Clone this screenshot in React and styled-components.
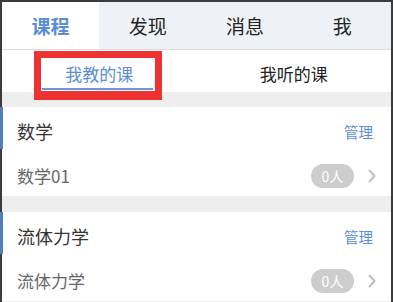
import React from "react";
import styled, { createGlobalStyle } from "styled-components";

const GlobalStyle = createGlobalStyle`
  html, body { margin: 0; padding: 0; background: #eeeeee; }
  body { font-family: "Noto Sans CJK SC", "Noto Sans", sans-serif; }
  * { box-sizing: border-box; }
`;

const Frame = styled.div`
  width: 393px;
  min-height: 302px;
  border: 2px solid #3b3b3b;
  border-bottom: none;
  background: #eeeeee;
`;

const TopTabs = styled.nav`
  display: grid;
  grid-template-columns: repeat(4, 1fr);
  height: 48px;
  background: #eef2f6;
  border-bottom: 1px solid #d9dbde;
`;

const TopTab = styled.div`
  display: flex;
  align-items: center;
  justify-content: center;
  font-size: 19px;
  font-weight: ${(p) => (p.$active ? 700 : 400)};
  color: ${(p) => (p.$active ? "#5b8dd6" : "#222")};
  background: ${(p) => (p.$active ? "#ffffff" : "transparent")};
`;

const SubTabs = styled.div`
  position: relative;
  display: grid;
  grid-template-columns: 1fr 1fr;
  height: 42px;
  background: #fff;
`;

const SubTab = styled.div`
  display: flex;
  flex-direction: column;
  align-items: center;
  padding-top: 13px;
  font-size: 17px;
  line-height: 22px;
  color: ${(p) => (p.$active ? "#5b8dd6" : "#222")};
`;

const Underline = styled.div`
  width: 111px;
  height: 2px;
  margin-top: 3px;
  margin-right: 3px;
  background: #6a97d8;
`;

const Highlight = styled.div`
  position: absolute;
  left: 32px;
  top: 1px;
  width: 128px;
  height: 49px;
  border: 7px solid #ee3131;
  border-bottom-width: 9px;
  pointer-events: none;
`;

const List = styled.div`
  display: flex;
  flex-direction: column;
  gap: 16px;
  padding-top: 15px;
`;

const Card = styled.section`
  position: relative;
  background: #fff;
`;

const Accent = styled.div`
  position: absolute;
  left: -2px;
  top: 0;
  width: 3px;
  height: 42px;
  background: #4f7fc1;
`;

const CardHeader = styled.div`
  display: flex;
  align-items: center;
  justify-content: space-between;
  height: 48px;
  padding: 0 18px 0 15px;
`;

const Title = styled.div`
  font-size: 18px;
  color: #333;
`;

const Manage = styled.div`
  font-size: 14.5px;
  color: #5b8dd6;
`;

const Row = styled.div`
  display: flex;
  align-items: center;
  height: 41px;
  padding: 0 15px 0 15px;
`;

const RowName = styled.div`
  flex: 1;
  font-size: 17px;
  color: #666;
`;

const Badge = styled.div`
  display: flex;
  align-items: center;
  justify-content: center;
  width: 43px;
  height: 24px;
  border-radius: 12px;
  background: #cdcdcd;
  color: #fff;
  font-size: 14px;
  margin-right: 14px;
`;

const Chevron = () => (
  <svg width="8" height="14" viewBox="0 0 8 14" fill="none">
    <path d="M1.5 1.5 L6.5 7 L1.5 12.5" stroke="#bdbdbd" strokeWidth="2" strokeLinecap="round" strokeLinejoin="round" />
  </svg>
);

const courses = [
  { title: "数学", cls: "数学01", count: 0 },
  { title: "流体力学", cls: "流体力学", count: 0 },
];

export default function App() {
  return (
    <>
      <GlobalStyle />
      <Frame>
        <TopTabs>
          <TopTab $active>课程</TopTab>
          <TopTab>发现</TopTab>
          <TopTab>消息</TopTab>
          <TopTab>我</TopTab>
        </TopTabs>
        <SubTabs>
          <SubTab $active>
            我教的课
            <Underline />
          </SubTab>
          <SubTab>我听的课</SubTab>
          <Highlight />
        </SubTabs>
        <List>
          {courses.map((c) => (
            <Card key={c.title}>
              <Accent />
              <CardHeader>
                <Title>{c.title}</Title>
                <Manage>管理</Manage>
              </CardHeader>
              <Row>
                <RowName>{c.cls}</RowName>
                <Badge>{c.count}人</Badge>
                <Chevron />
              </Row>
            </Card>
          ))}
        </List>
      </Frame>
    </>
  );
}
